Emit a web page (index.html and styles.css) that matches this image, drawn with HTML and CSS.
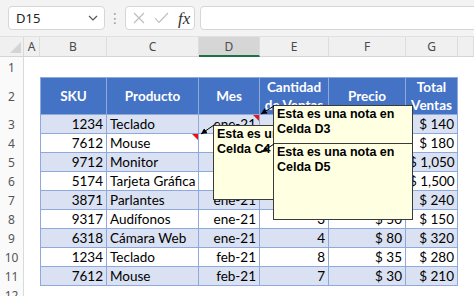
FILE: index.html
```html
<!DOCTYPE html>
<html lang="es">
<head>
  <meta charset="UTF-8" />
  <title>Notas en Excel</title>
  <link rel="stylesheet" href="styles.css">
</head>
<body>
  <div class="toolbar">
    <div class="namebox">
      <span>D15</span>
      <svg width="10" height="6" viewBox="0 0 10 6"><path d="M1 1 L5 5 L9 1" fill="none" stroke="#555" stroke-width="1.2"/></svg>
    </div>
    <div class="grip">⋮</div>
    <div class="fxbox">
      <svg width="12" height="12" viewBox="0 0 12 12"><path d="M1 1 L11 11 M11 1 L1 11" stroke="#bcbcbc" stroke-width="1.1"/></svg>
      <svg width="15" height="12" viewBox="0 0 15 12"><path d="M1 6 L5 10.5 L14 1" fill="none" stroke="#bcbcbc" stroke-width="1.1"/></svg>
      <span class="fx">fx</span>
    </div>
    <div class="formula"></div>
  </div>

  <div class="sheet">
    <div class="corner"></div><div class="ch">A</div><div class="ch">B</div><div class="ch">C</div><div class="ch sel">D</div><div class="ch">E</div><div class="ch">F</div><div class="ch">G</div><div class="ch"></div>

    <div class="rh">1</div><div></div><div></div><div></div><div></div><div></div><div></div><div></div><div></div>

    <div class="rh">2</div><div></div>
    <div class="th first">SKU</div><div class="th">Producto</div><div class="th">Mes</div><div class="th">Cantidad de Ventas</div><div class="th">Precio</div><div class="th">Total Ventas</div>
    <div></div>

    <div class="rh">3</div><div></div>
    <div class="td first num alt">1234</div><div class="td alt">Teclado</div><div class="td num alt noted">ene-21</div><div class="td num alt">4</div><div class="td num alt">$ 35</div><div class="td num alt">$ 140</div>
    <div></div>

    <div class="rh">4</div><div></div>
    <div class="td first num">7612</div><div class="td noted">Mouse</div><div class="td num">ene-21</div><div class="td num">6</div><div class="td num">$ 30</div><div class="td num">$ 180</div>
    <div></div>

    <div class="rh">5</div><div></div>
    <div class="td first num alt">9712</div><div class="td alt">Monitor</div><div class="td num alt noted">ene-21</div><div class="td num alt">7</div><div class="td num alt">$ 150</div><div class="td num alt">$ 1,050</div>
    <div></div>

    <div class="rh">6</div><div></div>
    <div class="td first num">5174</div><div class="td">Tarjeta Gráfica</div><div class="td num">ene-21</div><div class="td num">3</div><div class="td num">$ 500</div><div class="td num">$ 1,500</div>
    <div></div>

    <div class="rh">7</div><div></div>
    <div class="td first num alt">3871</div><div class="td alt">Parlantes</div><div class="td num alt">ene-21</div><div class="td num alt">4</div><div class="td num alt">$ 60</div><div class="td num alt">$ 240</div>
    <div></div>

    <div class="rh">8</div><div></div>
    <div class="td first num">9317</div><div class="td">Audífonos</div><div class="td num">ene-21</div><div class="td num">3</div><div class="td num">$ 50</div><div class="td num">$ 150</div>
    <div></div>

    <div class="rh">9</div><div></div>
    <div class="td first num alt">6318</div><div class="td alt">Cámara Web</div><div class="td num alt">ene-21</div><div class="td num alt">4</div><div class="td num alt">$ 80</div><div class="td num alt">$ 320</div>
    <div></div>

    <div class="rh">10</div><div></div>
    <div class="td first num">1234</div><div class="td">Teclado</div><div class="td num">feb-21</div><div class="td num">8</div><div class="td num">$ 35</div><div class="td num">$ 280</div>
    <div></div>

    <div class="rh">11</div><div></div>
    <div class="td first num alt">7612</div><div class="td alt">Mouse</div><div class="td num alt">feb-21</div><div class="td num alt">7</div><div class="td num alt">$ 30</div><div class="td num alt">$ 210</div>
    <div></div>

    <div class="rh">12</div><div></div><div></div><div></div><div></div><div></div><div></div><div></div><div></div>
  </div>

  <div class="note note-c4">Esta es una nota en Celda C4</div>
  <div class="note note-d3">Esta es una nota en Celda D3</div>
  <div class="note note-d5">Esta es una nota en Celda D5</div>

  <svg class="arrows" width="474" height="296">
    <defs>
      <marker id="head" viewBox="0 0 10 10" refX="10" refY="5" markerWidth="6" markerHeight="6" markerUnits="userSpaceOnUse" orient="auto">
        <path d="M0 0 L10 5 L0 10 z" fill="#000"/>
      </marker>
    </defs>
    <line x1="214" y1="125" x2="201" y2="134" stroke="#000" marker-end="url(#head)"/>
    <line x1="274" y1="106" x2="261" y2="114" stroke="#000" marker-end="url(#head)"/>
    <line x1="274" y1="144" x2="262" y2="152" stroke="#000" marker-end="url(#head)"/>
  </svg>
</body>
</html>
```

FILE: styles.css
```css
body {
  margin: 0;
  width: 474px;
  height: 296px;
  overflow: hidden;
  position: relative;
  background: #fff;
  font-family: Lato, "Liberation Sans", sans-serif;
  color: #000;
}

/* formula bar */
.toolbar {
  display: flex;
  align-items: center;
  height: 37px;
  box-sizing: border-box;
  padding: 0 0 0 8px;
  background: #f3f3f3;
  border-bottom: 1px solid #e0e0e0;
}

.namebox,
.fxbox,
.formula {
  height: 24px;
  box-sizing: border-box;
  background: #fff;
  border: 1px solid #d6d6d6;
  border-radius: 4px;
}

.namebox {
  width: 97px;
  display: flex;
  align-items: center;
  justify-content: space-between;
  padding: 0 6px 0 7px;
  font-family: "Noto Sans", sans-serif;
  font-size: 13px;
  color: #222;
}

.grip {
  width: 20px;
  text-align: center;
  color: #9a9a9a;
  font-size: 14px;
  font-family: "DejaVu Sans", sans-serif;
}

.fxbox {
  width: 70px;
  display: flex;
  align-items: center;
  gap: 9px;
  padding-left: 7px;
}

.fx {
  font-family: "Liberation Serif", serif;
  font-style: italic;
  font-size: 17px;
  color: #333;
  line-height: 1;
}

.formula {
  flex: 1;
  margin-left: 5px;
  margin-right: -10px;
}

/* worksheet */
.sheet {
  display: grid;
  grid-template-columns: 24px 16px 67px 92px 61px 69px 77px 52px 16px;
  grid-template-rows: 20px 20px 38px repeat(9, 19px) 19px;
}

.sheet > div {
  box-sizing: border-box;
  min-width: 0;
}

.corner {
  position: relative;
  background: #f0f0f0;
  border-bottom: 1px solid #d4d4d4;
  border-right: 1px solid #dadada;
}

.corner::after {
  content: "";
  position: absolute;
  right: 2px;
  bottom: 3px;
  border-style: solid;
  border-width: 0 0 11px 11px;
  border-color: transparent transparent #d4d4d4 transparent;
}

.ch {
  background: #f0f0f0;
  border-bottom: 1px solid #d4d4d4;
  border-right: 1px solid #dddddd;
  font-family: "Noto Sans", sans-serif;
  font-size: 12px;
  color: #4a4a4a;
  display: flex;
  align-items: center;
  justify-content: center;
}

.ch.sel {
  background: #d6d6d6;
  border-bottom: 2px solid #1e7145;
}

.rh {
  background: #fafafa;
  border-right: 1px solid #dadada;
  font-family: "Noto Sans", sans-serif;
  font-size: 12px;
  color: #555;
  display: flex;
  align-items: center;
  justify-content: center;
}

.th {
  background: #4472c4;
  color: #fff;
  font-weight: bold;
  font-size: 13.5px;
  line-height: 18px;
  text-align: center;
  display: flex;
  align-items: center;
  justify-content: center;
  padding: 0 2px;
  border-top: 1px solid #8eaadb;
  border-right: 1px solid #8eaadb;
  border-bottom: 1px solid #8eaadb;
}

.td {
  font-size: 13.5px;
  line-height: 18px;
  padding: 0 3px;
  white-space: nowrap;
  overflow: hidden;
  border-right: 1px solid #8eaadb;
  border-bottom: 1px solid #8eaadb;
}

.first {
  border-left: 1px solid #8eaadb;
}

.num {
  text-align: right;
}

.alt {
  background: #d9e1f2;
}

.noted {
  position: relative;
}

.noted::after {
  content: "";
  position: absolute;
  top: 0;
  right: 0;
  border-style: solid;
  border-width: 0 6px 6px 0;
  border-color: transparent #e8141b transparent transparent;
}

/* comments */
.note {
  position: absolute;
  width: 140px;
  box-sizing: border-box;
  background: #ffffe1;
  border: 1px solid #3a3a3a;
  padding: 1px 3px;
  font-family: "Liberation Sans", sans-serif;
  font-weight: bold;
  font-size: 12.5px;
  line-height: 14.5px;
}

.note-c4 {
  left: 213px;
  top: 125px;
  height: 75px;
}

.note-d3 {
  left: 273px;
  top: 105px;
  height: 39px;
}

.note-d5 {
  left: 273px;
  top: 143px;
  height: 77px;
}

.arrows {
  position: absolute;
  left: 0;
  top: 0;
  pointer-events: none;
}
```
